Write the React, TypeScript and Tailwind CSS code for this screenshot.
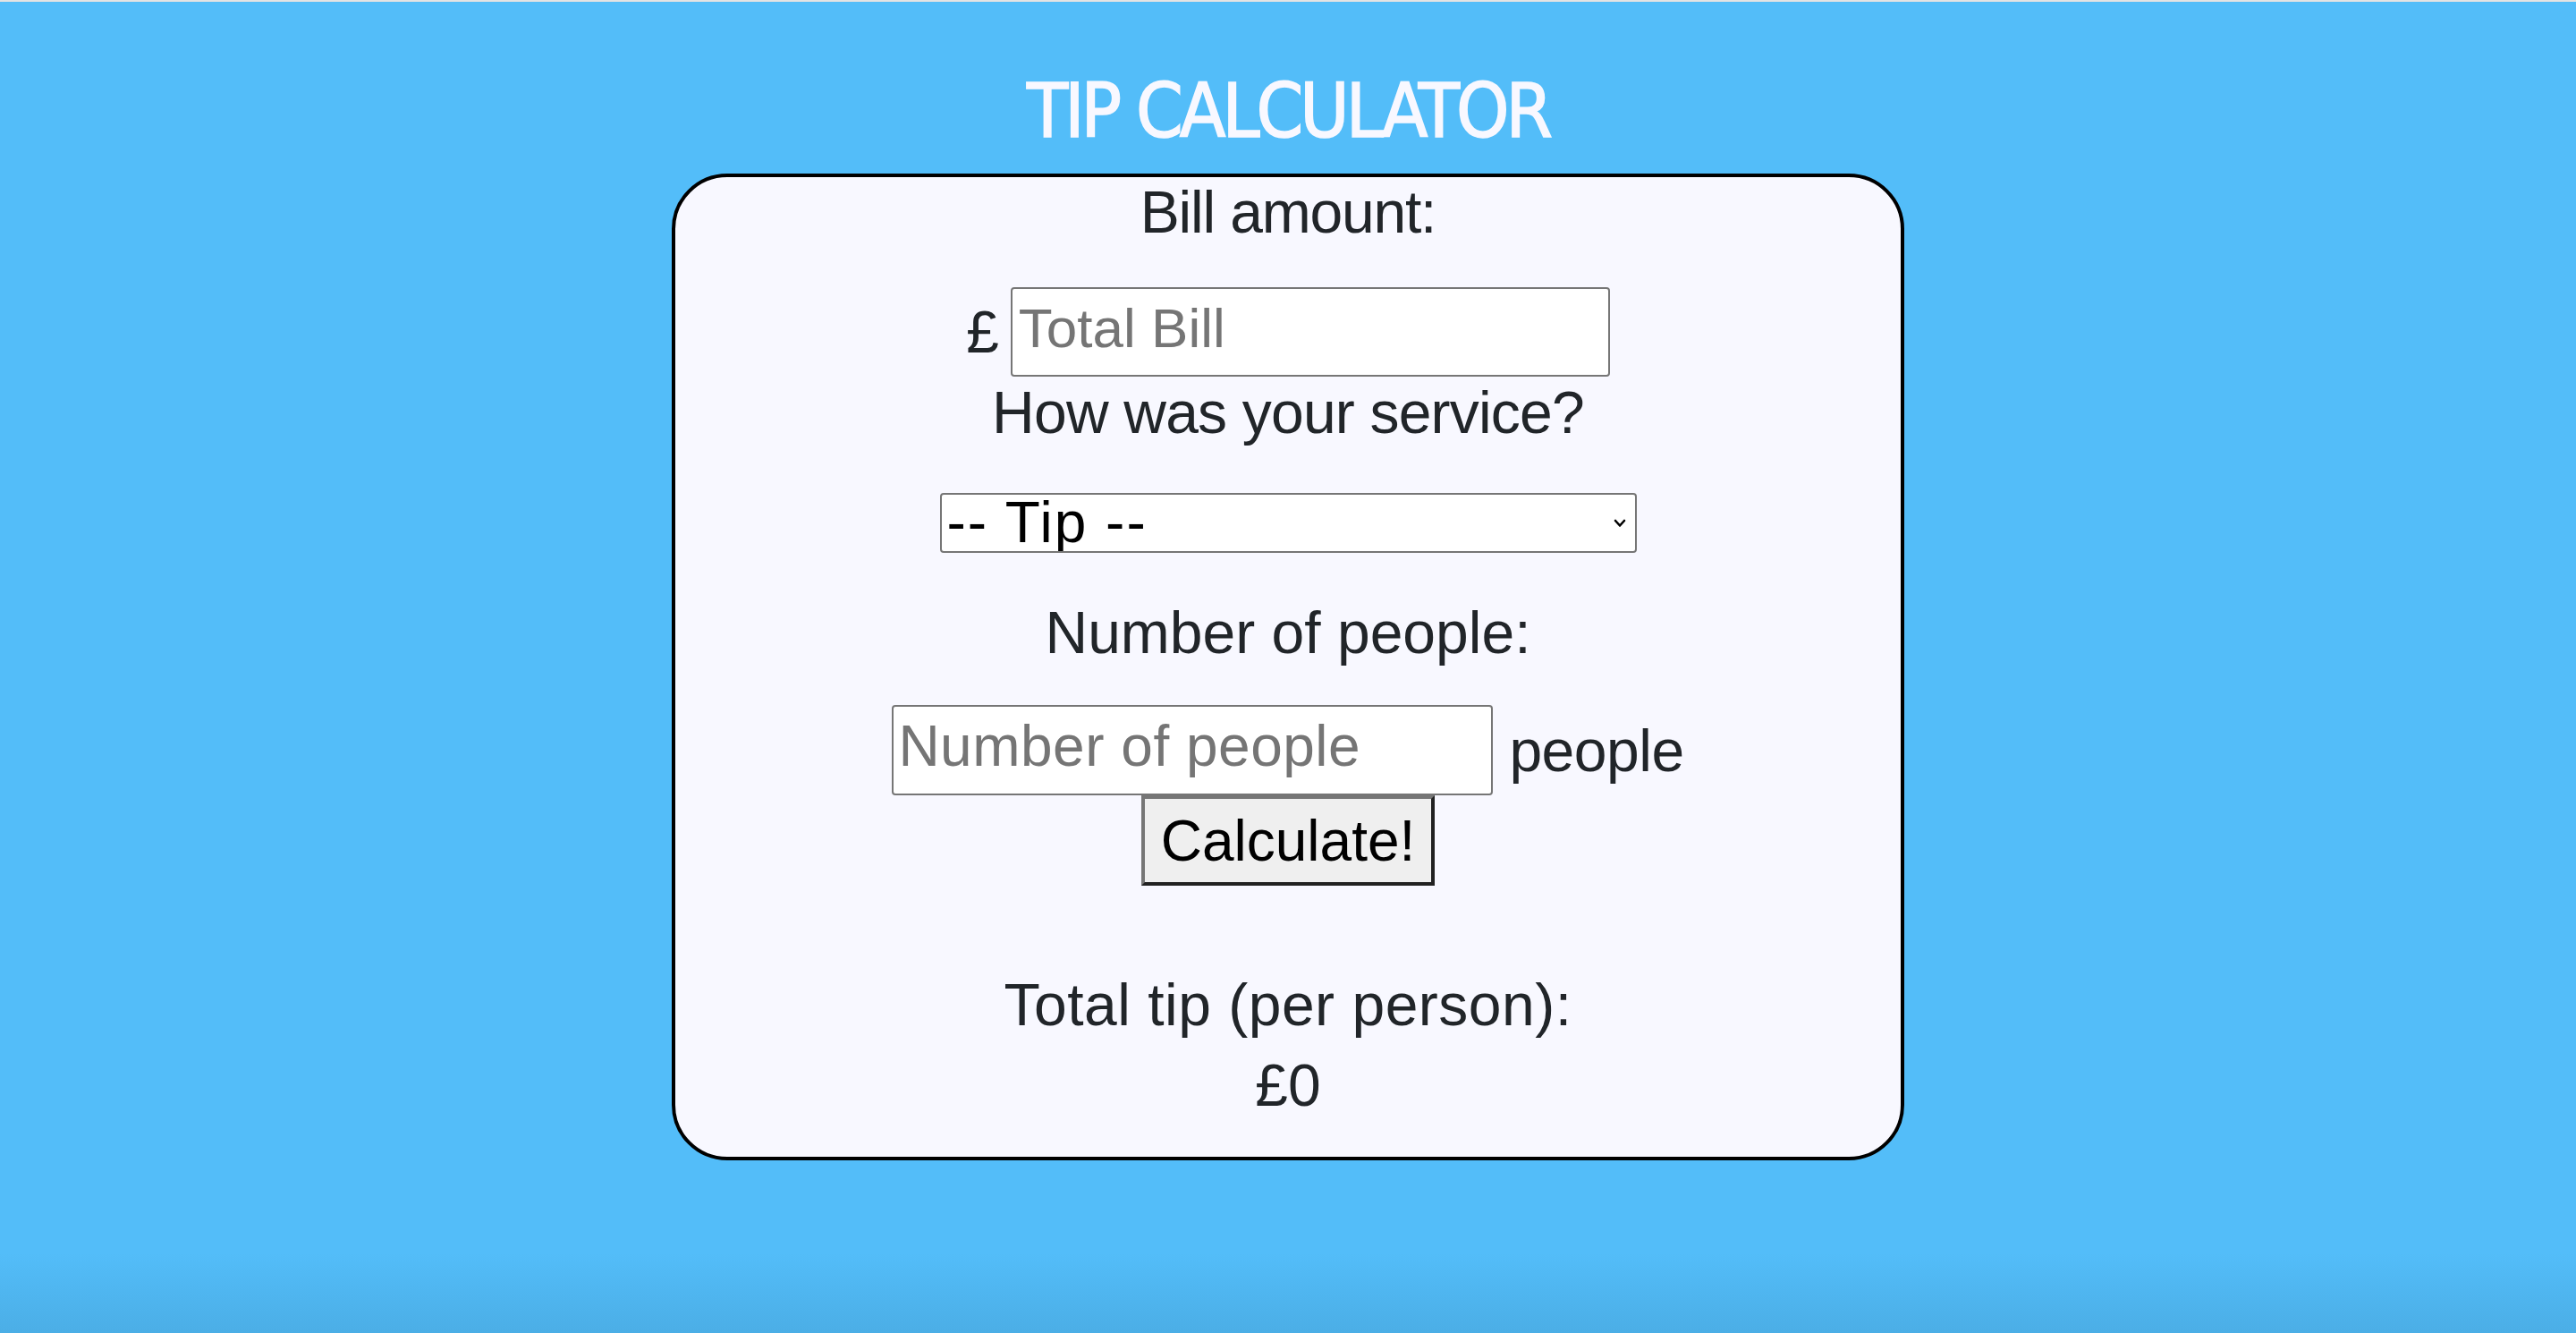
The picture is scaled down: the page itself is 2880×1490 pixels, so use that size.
import React from "react";

export default function App() {
  const body = "font-['Liberation_Sans',Arial,sans-serif]";
  return (
    <div className="min-h-screen w-full border-t-2 border-[#e3e3e3] bg-[linear-gradient(to_bottom,#53bdf9_0%,#53bdf9_94%,#4baee6_100%)] text-[#212529]">
      <div className={`flex flex-col items-center pt-[74px] ${body}`}>
        <h1 className="h-[96px] text-[84px] leading-[96px] font-normal tracking-[-4px] text-[#f8f8ff] font-['Liberation_Sans_Narrow','DejaVu_Sans_Condensed',sans-serif] [-webkit-text-stroke:1.5px_#f8f8ff]">
          TIP CALCULATOR
        </h1>
        <div className="mt-[22px] flex w-[1378px] flex-col items-center rounded-[62px] border-4 border-black bg-[#f8f8ff] pt-[2px] pb-[43px] text-center">
          <div className="h-[74px] text-[66px] leading-[74px] tracking-[-1.2px]">Bill amount:</div>
          <div className="mt-[47px] flex items-center justify-center gap-[13px]">
            <span className="text-[66px] leading-[74px]">£</span>
            <input
              type="text"
              placeholder="Total Bill"
              className="h-[100px] w-[670px] rounded-[4px] border-2 border-[#767676] bg-white pl-[7px] pb-[10px] text-[62px] text-black placeholder:text-[#757575] outline-none font-['Liberation_Sans',Arial,sans-serif]"
            />
          </div>
          <div className="mt-[3px] h-[74px] text-[66px] leading-[74px] tracking-[-0.8px]">How was your service?</div>
          <div className="relative mt-[53px] h-[67px] w-[779px]">
            <select
              defaultValue=""
              className="h-full w-full appearance-none rounded-[4px] border-2 border-[#767676] bg-white pl-[6px] text-[64px] leading-[63px] tracking-[2px] text-black outline-none font-['Liberation_Sans',Arial,sans-serif]"
            >
              <option value="">-- Tip --</option>
              <option value="0.3">30% - Outstanding</option>
              <option value="0.2">20% - Good</option>
              <option value="0.15">15% - It was OK</option>
              <option value="0.1">10% - Bad</option>
              <option value="0.05">5% - Terrible</option>
            </select>
            <svg
              className="pointer-events-none absolute right-[12px] top-[29px]"
              width="14"
              height="10"
              viewBox="0 0 14 10"
              fill="none"
            >
              <path d="M2 2 L7 7.5 L12 2" stroke="#000" strokeWidth="2.6" strokeLinecap="round" strokeLinejoin="round" />
            </svg>
          </div>
          <div className="mt-[52px] h-[74px] text-[66px] leading-[74px] tracking-[0px]">Number of people:</div>
          <div className="mt-[44px] flex h-[101px] items-center justify-center gap-[18px]">
            <input
              type="text"
              placeholder="Number of people"
              className="h-[101px] w-[672px] rounded-[4px] border-2 border-[#767676] bg-white pl-[5px] pb-[10px] text-[64px] tracking-[0.5px] text-black placeholder:text-[#757575] outline-none font-['Liberation_Sans',Arial,sans-serif]"
            />
            <span className="text-[66px] leading-[74px] tracking-[-0.5px]">people</span>
          </div>
          <button className="flex h-[101px] w-[328px] items-center justify-center border-4 border-t-[#767676] border-l-[#767676] border-r-[#222] border-b-[#222] bg-[#efefef] text-[64px] leading-[74px] text-black font-['Liberation_Sans',Arial,sans-serif]">
            Calculate!
          </button>
          <div className="mt-[96px] h-[74px] text-[66px] leading-[74px] tracking-[0.5px]">Total tip (per person):</div>
          <div className="mt-[16px] h-[74px] text-[66px] leading-[74px]">£0</div>
        </div>
      </div>
    </div>
  );
}
